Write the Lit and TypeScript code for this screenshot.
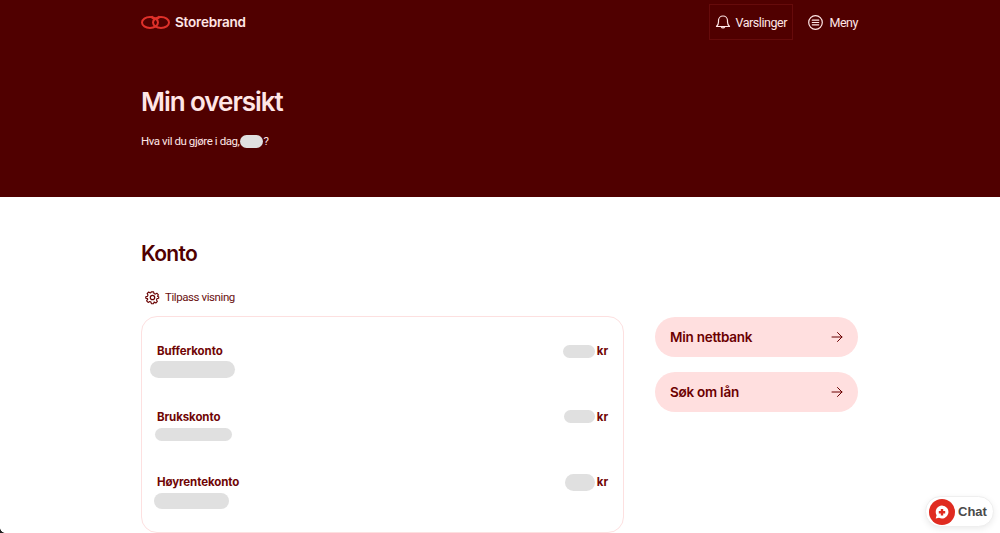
import { LitElement, html, css } from "lit";
import { customElement } from "lit/decorators.js";

const accounts = [
  { name: "Bufferkonto", subW: 85, subH: 17, subX: -7, subGap: 3, amtW: 32, amtH: 13 },
  { name: "Brukskonto", subW: 77, subH: 13, subX: -2, subGap: 4, amtW: 31, amtH: 13 },
  { name: "Høyrentekonto", subW: 75, subH: 16, subX: -3, subGap: 4, amtW: 30, amtH: 17 },
];

@customElement("app-root")
export class AppRoot extends LitElement {
  static styles = css`
    :host { display: block; height: 533px; overflow: hidden; background: #fff; position: relative; font-family: Inter, "Noto Sans", sans-serif; }
    .wrap { width: 717px; margin-left: 141px; }
    .hero { background: #500000; height: 197px; color: #ffe6e6; box-sizing: border-box; padding-top: 4px; }
    .nav { display: flex; align-items: center; height: 36px; }
    .logo { display: flex; align-items: center; gap: 5px; font-size: 13.5px; font-weight: 600; letter-spacing: -0.2px; }
    .logo svg { display: block; }
    .spacer { flex: 1; }
    .navbtn { display: flex; align-items: center; font-size: 12.5px; height: 36px; box-sizing: border-box; font-family: Roboto, sans-serif; letter-spacing: -0.45px; }
    .navbtn svg { flex: none; }
    .alerts { border: 1px solid #660b0b; padding: 0 0 0 5px; width: 84px; gap: 4px; }
    .menu { padding-left: 15px; gap: 6px; }
    h1 { margin: 46px 0 0; font-size: 26px; line-height: 32px; font-weight: 600; letter-spacing: -1.05px; }
    .greet { display: flex; align-items: center; margin-top: 16px; font-size: 11.5px; line-height: 14px; font-family: Roboto, sans-serif; letter-spacing: -0.42px; }
    .greet i { display: block; width: 23px; height: 13px; border-radius: 7px; background: #e0e0e0; margin-left: 1px; }
    h2 { margin: 43px 0 0; font-size: 21px; line-height: 27px; font-weight: 600; letter-spacing: -0.7px; color: #500000; }
    .tune { display: flex; align-items: center; gap: 5px; margin: 22px 0 0 4px; color: #6a1010; font-size: 11.5px; height: 16px; font-family: Roboto, sans-serif; letter-spacing: -0.42px; }
    .cols { display: flex; gap: 31px; margin-top: 11px; align-items: flex-start; }
    .card { width: 483px; height: 217px; box-sizing: border-box; border: 1px solid #fde0e0; border-radius: 16px; padding: 27px 15px 0; }
    .row { display: flex; align-items: center; justify-content: space-between; height: 14px; color: #700505; font-size: 11.5px; font-weight: 700; letter-spacing: -0.1px; }
    .item { height: 65.5px; }
    .amount { display: flex; align-items: center; gap: 2px; }
    .sk { display: block; background: #e0e0e0; border-radius: 9px; }
    .links { display: flex; flex-direction: column; gap: 15px; width: 203px; padding-top: 1px; }
    .link { display: flex; align-items: center; justify-content: space-between; height: 40px; padding: 0 15px; border-radius: 20px; background: #ffdfdf; color: #6b0000; font-size: 13.5px; font-weight: 600; letter-spacing: -0.25px; }
    .chat { position: absolute; left: 925px; top: 496px; width: 69px; height: 31px; box-sizing: border-box; display: flex; align-items: center; gap: 3px; padding-left: 3px; padding-bottom: 1px; background: #fff; border: 1px solid #efefef; border-radius: 16px; box-shadow: 0 2px 6px rgba(0,0,0,.08); font-family: "Liberation Sans", Arial, sans-serif; font-weight: 700; font-size: 13px; color: #4a4a4a; }
    .chat svg { margin-top: 1px; }
    .corner { position: absolute; left: 0; bottom: 0; width: 5px; height: 5px; background: radial-gradient(circle at 100% 0, transparent 4.500px, #222 5px); }
  `;

  render() {
    return html`
      <section class="hero">
        <div class="wrap">
          <div class="nav">
            <div class="logo">
              <svg width="29" height="14" viewBox="0 0 29 14" fill="none" stroke="#e0312a" stroke-width="2">
                <ellipse cx="9" cy="7.500" rx="8" ry="5.500" />
                <ellipse cx="20" cy="7.500" rx="8" ry="5.500" />
                <path d="M10.500 1C11 3 12.500 4 14.500 4s3.500-1 4-3" />
              </svg>
              Storebrand
            </div>
            <div class="spacer"></div>
            <div class="navbtn alerts">
              <svg width="16" height="16" viewBox="0 0 16 16" fill="none" stroke="#ffe6e6" stroke-width="1.200" stroke-linecap="round" stroke-linejoin="round">
                <path d="M1.500 12.500c1-1 2-2 2-4.500V6.500a4.500 4.500 0 0 1 9 0V8c0 2.500 1 3.500 2 4.500z" />
                <path d="M6.300 12.800a1.800 1.800 0 0 0 3.400 0" />
              </svg>
              Varslinger
            </div>
            <div class="navbtn menu">
              <svg width="15" height="15" viewBox="0 0 15 15" fill="none" stroke="#ffe6e6" stroke-width="1.200" stroke-linecap="round">
                <circle cx="7.500" cy="7.500" r="6.800" />
                <path d="M4.300 5.200h6.400M4.300 7.500h6.400M4.300 9.800h6.400" />
              </svg>
              Meny
            </div>
          </div>
          <h1>Min oversikt</h1>
          <div class="greet">Hva vil du gjøre i dag,<i></i>?</div>
        </div>
      </section>
      <div class="wrap">
        <h2>Konto</h2>
        <div class="tune">
          <svg width="15" height="15" viewBox="0 0 24 24" fill="none" stroke="#6a0505" stroke-width="2" stroke-linejoin="round">
            <circle cx="12" cy="12" r="3.500" />
            <path d="M10 2h4l.7 3 2.300 1 2.700-1.600 2.800 2.800L20.900 10l.1 0 2 .7v2.600l-3 .7-.9 2.300 1.600 2.700-2.800 2.800L15.200 20l-.5.200-.7 2.800h-4l-.7-2.800-2.300-1-2.700 1.600-2.800-2.800L3.600 15l-.6-1-3-.7v-2.600l3-.7 1-2.300L2.400 5l2.800-2.800L8 3.900l1.300-.9z" transform="translate(1.200 1.200) scale(.9)" />
          </svg>
          Tilpass visning
        </div>
        <div class="cols">
          <div class="card">
            ${accounts.map(
              (a) => html`
                <div class="item">
                  <div class="row">
                    <span>${a.name}</span>
                    <span class="amount">
                      <i class="sk" style="width:${a.amtW}px;height:${a.amtH}px"></i>kr
                    </span>
                  </div>
                  <i class="sk" style="width:${a.subW}px;height:${a.subH}px;margin-left:${a.subX}px;margin-top:${a.subGap}px"></i>
                </div>
              `
            )}
          </div>
          <div class="links">
            ${["Min nettbank", "Søk om lån"].map(
              (t) => html`
                <div class="link">
                  ${t}
                  <svg width="12" height="12" viewBox="0 0 12 12" fill="none" stroke="#6b0000" stroke-width="1" stroke-linecap="round" stroke-linejoin="round">
                    <path d="M1 6h10M6.500 1.500 11 6l-4.500 4.500" />
                  </svg>
                </div>
              `
            )}
          </div>
        </div>
      </div>
      <div class="chat">
        <svg width="26" height="26" viewBox="0 0 26 26">
          <circle cx="13" cy="13" r="13" fill="#e02b20" />
          <path d="M13 6.500a6.500 6.500 0 1 1-3 12.300L6.700 19.500l.9-3.200A6.500 6.500 0 0 1 13 6.500z" fill="#fff" />
          <path d="M11.800 10h2.400v2h2v2.400h-2v2h-2.400v-2h-2V12h2z" fill="#e02b20" />
        </svg>
        Chat
      </div>
      <div class="corner"></div>
    `;
  }
}
